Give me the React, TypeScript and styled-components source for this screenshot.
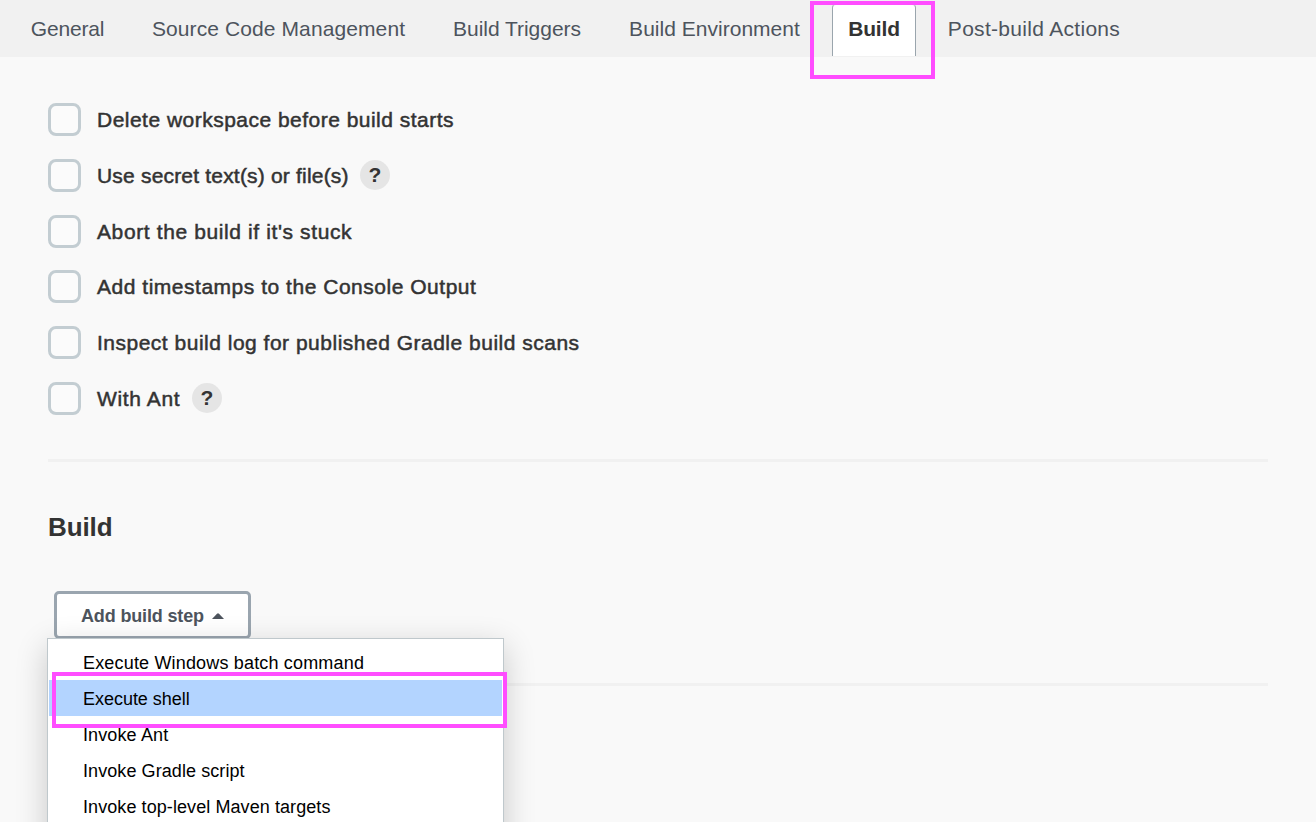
import React from 'react';
import styled, { createGlobalStyle } from 'styled-components';

const GlobalStyle = createGlobalStyle`
  * { box-sizing: border-box; }
  html, body { margin: 0; padding: 0; overflow: hidden; }
  body {
    background: #f9f9f9;
    color: #333;
    font-family: "Liberation Sans", Arial, sans-serif;
  }
`;

const Page = styled.div`
  position: relative;
  width: 100%;
  height: 822px;
  overflow: hidden;
  background: #f9f9f9;
`;

const TabBar = styled.nav`
  display: flex;
  gap: 16px;
  height: 57px;
  padding-left: 15px;
  background: #f1f1f1;
`;

const Tab = styled.a<{ $width: number; $active?: boolean; $spacing: number }>`
  display: flex;
  justify-content: center;
  flex: none;
  width: ${p => p.$width}px;
  height: ${p => (p.$active ? 52 : 57)}px;
  margin-top: ${p => (p.$active ? 4 : 0)}px;
  padding-top: ${p => (p.$active ? 11 : 16)}px;
  border: ${p => (p.$active ? '1px solid #9aa5ad' : '0')};
  border-top-color: #d5d9dc;
  border-bottom: 0;
  border-radius: 4px 4px 0 0;
  background: ${p => (p.$active ? '#fff' : 'transparent')};
  color: ${p => (p.$active ? '#333' : '#4d545d')};
  font-size: 21px;
  line-height: 25px;
  font-weight: ${p => (p.$active ? 700 : 400)};
  letter-spacing: ${p => p.$spacing}px;
  white-space: nowrap;
`;

const Content = styled.main`
  padding: 46px 48px 0;
`;

const Options = styled.div`
  display: flex;
  flex-direction: column;
  gap: 22.8px;
`;

const OptionRow = styled.label`
  display: flex;
  align-items: center;
  height: 33px;
`;

const CheckBox = styled.span`
  flex: none;
  width: 33px;
  height: 33px;
  margin-right: 16px;
  border: 3px solid #c3cdd2;
  border-radius: 8px;
  background: #fbfbfb;
`;

const OptionText = styled.span<{ $width: number; $spacing: number }>`
  width: ${p => p.$width}px;
  font-size: 21px;
  line-height: 25px;
  letter-spacing: ${p => p.$spacing}px;
  -webkit-text-stroke: 0.5px #333;
  white-space: nowrap;
`;

const Help = styled.span`
  display: flex;
  align-items: center;
  justify-content: center;
  width: 30px;
  height: 30px;
  margin: -1px 0 0 11px;
  border-radius: 50%;
  background: #e5e5e5;
  font-size: 21px;
  line-height: 30px;
  font-weight: 700;
`;

const Rule = styled.hr<{ $top: number }>`
  height: 3px;
  margin: ${p => p.$top}px 0 0;
  border: 0;
  background: #f1f1f1;
`;

const Heading = styled.h2`
  margin: 49px 0 0;
  font-size: 26px;
  line-height: 32px;
  letter-spacing: -0.1px;
`;

const StepButton = styled.button`
  display: flex;
  align-items: center;
  gap: 8px;
  width: 197px;
  height: 48px;
  margin: 48px 0 0 6px;
  padding: 2px 0 0 24px;
  border: 3px solid #9aa5af;
  border-radius: 5px;
  background: #fff;
  color: #4d545d;
  font: 700 18px/22px "Liberation Sans", Arial, sans-serif;
  letter-spacing: -0.15px;
  white-space: nowrap;
`;

const Menu = styled.div`
  position: absolute;
  left: 47px;
  top: 638px;
  width: 457px;
  height: 240px;
  padding: 5px 1px;
  border: 1px solid #bfc8cc;
  background: #fff;
  box-shadow: 0 9px 30px rgba(0, 0, 0, 0.2);
`;

const MenuItem = styled.div<{ $selected?: boolean; $spacing: number }>`
  height: 36px;
  padding-left: 34px;
  background: ${p => (p.$selected ? '#b3d4ff' : '#fff')};
  color: #000;
  font-size: 18px;
  line-height: 39px;
  letter-spacing: ${p => p.$spacing}px;
  white-space: nowrap;
`;

const Marker = styled.div<{ $x: number; $y: number; $w: number; $h: number }>`
  position: absolute;
  left: ${p => p.$x}px;
  top: ${p => p.$y}px;
  width: ${p => p.$w}px;
  height: ${p => p.$h}px;
  border: 4px solid #ff4dff;
  pointer-events: none;
`;

const tabs = [
  { label: 'General', width: 105, spacing: -0.2 },
  { label: 'Source Code Management', width: 285, spacing: 0.1 },
  { label: 'Build Triggers', width: 160, spacing: -0.03 },
  { label: 'Build Environment', width: 203, spacing: 0.02 },
  { label: 'Build', width: 84, spacing: -0.15, active: true },
  { label: 'Post-build Actions', width: 204, spacing: 0.3 },
];

const options = [
  { label: 'Delete workspace before build starts', width: 357, spacing: 0.48 },
  { label: 'Use secret text(s) or file(s)', width: 252, spacing: 0.19, help: true },
  { label: "Abort the build if it's stuck", width: 255, spacing: 0.61 },
  { label: 'Add timestamps to the Console Output', width: 380, spacing: 0.52 },
  { label: 'Inspect build log for published Gradle build scans', width: 482, spacing: 0.5 },
  { label: 'With Ant', width: 84, spacing: 0.62, help: true },
];

const steps = [
  { label: 'Execute Windows batch command', spacing: 0.17 },
  { label: 'Execute shell', spacing: -0.03, selected: true },
  { label: 'Invoke Ant', spacing: 0.12 },
  { label: 'Invoke Gradle script', spacing: 0.08 },
  { label: 'Invoke top-level Maven targets', spacing: 0.08 },
];

export default function App() {
  return (
    <Page>
      <GlobalStyle />
      <TabBar>
        {tabs.map(t => (
          <Tab key={t.label} $width={t.width} $active={t.active} $spacing={t.spacing}>
            {t.label}
          </Tab>
        ))}
      </TabBar>
      <Content>
        <Options>
          {options.map(o => (
            <OptionRow key={o.label}>
              <CheckBox />
              <OptionText $width={o.width} $spacing={o.spacing}>{o.label}</OptionText>
              {o.help && <Help>?</Help>}
            </OptionRow>
          ))}
        </Options>
        <Rule $top={44} />
        <Heading>Build</Heading>
        <StepButton type="button">
          Add build step
          <svg width="12" height="6" viewBox="0 0 12 6">
            <path d="M0 6 L5 0.7 Q6 -0.2 7 0.7 L12 6 Z" fill="#4d545d" />
          </svg>
        </StepButton>
        <Rule $top={44} />
      </Content>
      <Menu>
        {steps.map(s => (
          <MenuItem key={s.label} $selected={s.selected} $spacing={s.spacing}>{s.label}</MenuItem>
        ))}
      </Menu>
      <Marker $x={810} $y={1} $w={125} $h={78} />
      <Marker $x={52} $y={672} $w={455} $h={56} />
    </Page>
  );
}
